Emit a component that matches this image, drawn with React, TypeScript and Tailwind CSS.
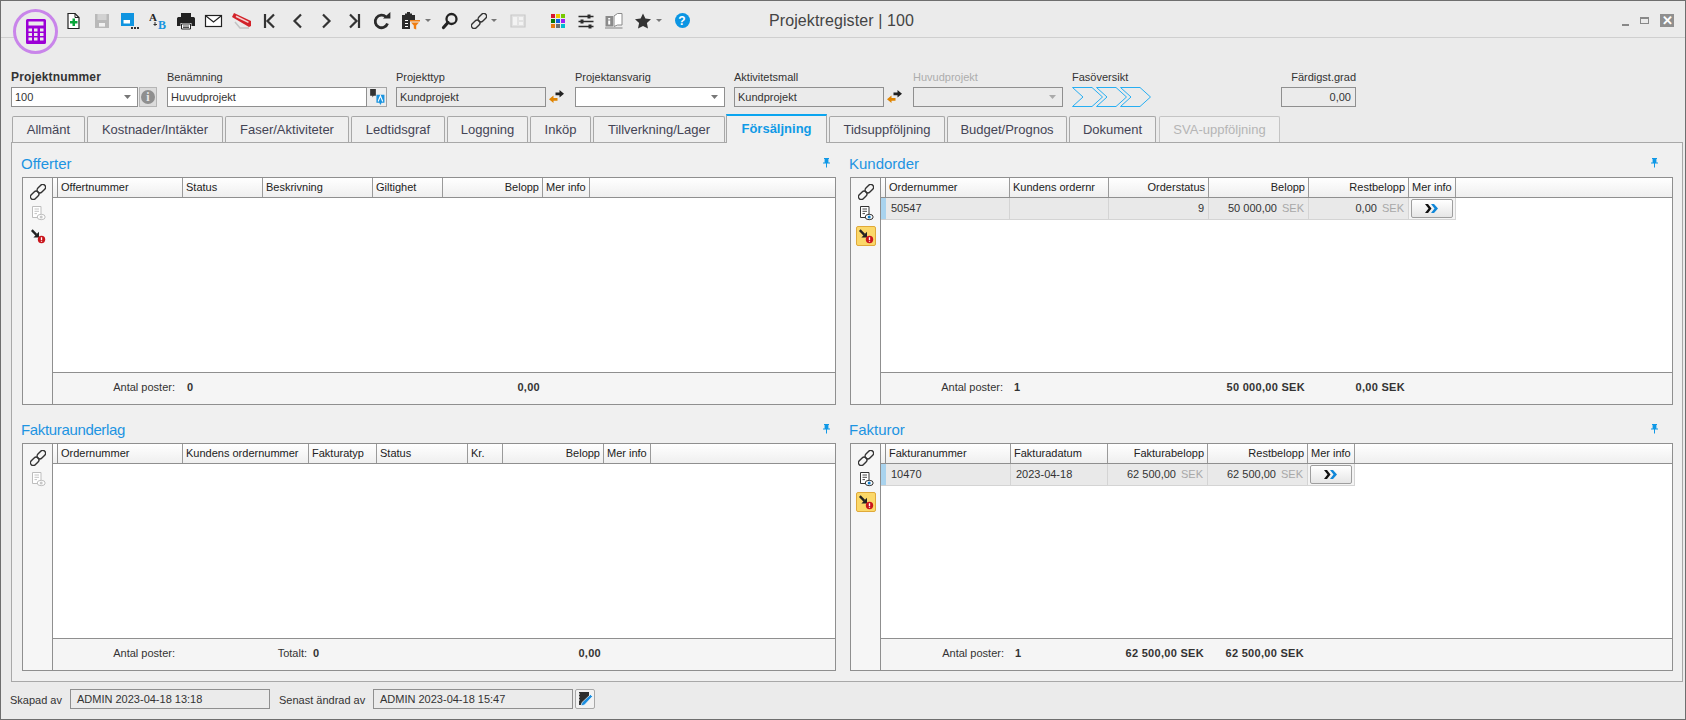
import React from "react";

type Col = { label: string; w: number; right?: boolean };
type Cell = { text?: React.ReactNode; right?: boolean; bold?: boolean; pr?: number };

const S = ({ w = 18, h = 18, vb = "0 0 18 18", children }: { w?: number; h?: number; vb?: string; children: React.ReactNode }) => (
  <svg width={w} height={h} viewBox={vb} className="block shrink-0">{children}</svg>
);

const IconNew = () => (
  <S>
    <path d="M3 1.5h7l4 4v11H3z" fill="#fff" stroke="#222" strokeWidth="1.2" />
    <path d="M10 1.5v4h4" fill="none" stroke="#222" />
    <path d="M7.5 6.5H10V9h2.5v2.5H10V14H7.5v-2.5H5V9h2.5z" fill="#0aa53a" />
  </S>
);
const IconSave = () => (
  <S>
    <path d="M2 2h14v14H2z" fill="#b9b9b9" />
    <path d="M4.5 2h9v6h-9z" fill="#d2d2d2" />
    <path d="M6 11h6v3.6H6z" fill="#f1f1f1" />
  </S>
);
const IconSaveAs = () => (
  <S w={20} vb="0 0 20 18">
    <path d="M1 1h13v13H1z" fill="#0f94e0" />
    <path d="M3.5 8h6.5v3.5H3.5z" fill="#fff" />
    <path d="M11 15h2v2h-2zM14 15h2v2h-2zM17 15h2v2h-2z" fill="#333" />
  </S>
);
const IconAB = () => (
  <S w={18} vb="0 0 18 18">
    <text x="0" y="9" fontFamily="Liberation Serif" fontWeight="700" fontSize="11" fill="#222">A</text>
    <path d="M6 10v4M4.5 12.5h3.5" stroke="#333" fill="none" strokeWidth="1" />
    <text x="9" y="16.5" fontFamily="Liberation Serif" fontWeight="700" fontSize="12" fill="#1895e0">B</text>
  </S>
);
const IconPrint = () => (
  <S w={20} vb="0 0 20 18">
    <path d="M5 1h10v4H5z" fill="#222" />
    <path d="M1 6.5C1 5.5 2 5 3 5h14c1 0 2 .5 2 1.5V14h-3.5v-3h-11v3H1z" fill="#222" />
    <path d="M5.5 12h9v5h-9z" fill="#fff" stroke="#222" />
    <path d="M7 14h6M7 15.5h6" stroke="#222" strokeWidth=".8" />
  </S>
);
const IconMail = () => (
  <S w={20} vb="0 0 20 18">
    <rect x="1.5" y="3.5" width="16" height="11" fill="#fff" stroke="#222" strokeWidth="1.2" />
    <path d="M2 4l7.5 6L17 4" fill="none" stroke="#222" strokeWidth="1.2" />
  </S>
);
const IconTag = () => (
  <S w={20} vb="0 0 20 18">
    <path d="M0 5L2 1 19 9v5l-2 1z" fill="#d3232a" />
    <path d="M4 4.2L16.5 10.4" stroke="#f6d2d2" strokeWidth="1.6" />
    <path d="M3 10l5 6h9" stroke="#c4c4c4" strokeWidth="1.6" fill="none" />
  </S>
);
const Nav = ({ d }: { d: string }) => (
  <S>
    <path d={d} fill="none" stroke="#333" strokeWidth="2.2" />
  </S>
);
const IconRefresh = () => (
  <S w={20} vb="0 0 20 18">
    <path d="M15.5 11.5A6.3 6.3 0 1 1 14 5" fill="none" stroke="#2b2b2b" strokeWidth="2.8" />
    <path d="M11 6.6h7.4V0z" fill="#2b2b2b" />
  </S>
);
const IconClip = () => (
  <S w={20} h={20} vb="0 0 20 20">
    <path d="M1 4h3V2.5h2V1h3v1.5h2V4h3v5H9v9H1z" fill="#2b2b2b" />
    <path d="M4 9h3v1H4zM4 12h3v1H4zM4 15h3v1H4z" fill="#fff" />
    <path d="M9 9h10v1.5H9zM10 11.5h8l-2.8 3v4l-2.4-1v-3z" fill="#ef7d11" />
  </S>
);
const Caret = () => (
  <svg width="6" height="3" viewBox="0 0 6 3" className="ml-1 block shrink-0">
    <path d="M0 0h6L3 3z" fill="#777" />
  </svg>
);
const IconSearch = () => (
  <S>
    <circle cx="10.5" cy="7" r="5" fill="none" stroke="#222" strokeWidth="2.3" />
    <path d="M7 10.5L2.5 15.5" stroke="#222" strokeWidth="3.2" strokeLinecap="round" />
  </S>
);
const IconLink = ({ c = "#333", s = 16 }: { c?: string; s?: number }) => (
  <svg width={s} height={s} viewBox="0 0 16 16" className="block shrink-0">
    <g fill="none" stroke={c} strokeWidth="1.4" transform="rotate(-45 8 8)">
      <rect x="-1.5" y="5.2" width="9.6" height="5.6" rx="2.8" />
      <rect x="7.9" y="5.2" width="9.6" height="5.6" rx="2.8" />
    </g>
  </svg>
);
const IconLayout = () => (
  <S>
    <path d="M2 3h14v12H2z" fill="#e2e2e2" stroke="#c9c9c9" strokeWidth="1.2" />
    <path d="M4 5h4v8H4z M10 5h4v3h-4z M10 10h4v3h-4z" fill="#f3f3f3" />
  </S>
);
const IconColors = () => {
  const c = ["#d8142c", "#e8c800", "#78c800", "#0a7a0a", "#1060e0", "#a020f0", "#e87a10", "#6f6f6f", "#00bcd0"];
  return (
    <div className="grid h-[14px] w-[14px] grid-cols-3 gap-[1px]">
      {c.map((x) => (
        <svg key={x} viewBox="0 0 4 4" className="block h-full w-full"><rect width="4" height="4" fill={x} /></svg>
      ))}
    </div>
  );
};
const IconSliders = () => (
  <S>
    <path d="M1.5 4.5h15M1.5 9.5h15M1.5 14.5h15" stroke="#2b2b2b" strokeWidth="1.4" />
    <path d="M10.5 2.5h3v4h-3zM3.5 7.5h3v4h-3zM11.5 12.5h3v4h-3z" fill="#2b2b2b" />
  </S>
);
const IconBook = () => (
  <S w={18} vb="0 0 18 18">
    <path d="M.5 4h7.5v10.5H.5z" fill="#8a8a8a" />
    <path d="M3.2 6h2v1.4h-2zM3.2 8.4h2v4h-2z" fill="#fff" />
    <path d="M9 4l3.5-2.5 4.5 0V13l-4.5 0L9 14.5z" fill="#fff" stroke="#8a8a8a" />
    <path d="M0 16h17.5" stroke="#8a8a8a" strokeWidth="1.1" />
  </S>
);
const IconStar = () => (
  <S>
    <path d="M9 1.5l2.4 5.1 5.6.7-4.1 3.8 1.1 5.5L9 13.9l-5 2.7 1.1-5.5L1 7.3l5.6-.7z" fill="#333" />
  </S>
);
const IconHelp = () => (
  <div className="flex h-[15px] w-[15px] items-center justify-center rounded-full bg-[#0b95e3] text-[12px] font-bold leading-none text-white">?</div>
);
const IconArrows = () => (
  <svg width="15" height="15" viewBox="0 0 15 15" className="block shrink-0">
    <path d="M6.5 3.5H10.5V1L15 4.8 10.5 8.5V6.2H6.5z" fill="#222" />
    <path d="M8.5 9H4.5V6.5L0 10.2 4.5 14V11.7H8.5z" fill="#e08400" />
  </svg>
);
const IconDoc = ({ c = "#333", e = "#0f7cc8" }: { c?: string; e?: string }) => (
  <svg width="16" height="16" viewBox="0 0 16 16" className="block shrink-0">
    <path d="M2.5 1.5h8.5v11H2.5z" fill="#fff" stroke={c} />
    <path d="M4.5 4H9M4.5 6.3H9M4.5 8.6H7" stroke={c} strokeWidth=".9" />
    <ellipse cx="11.2" cy="12" rx="4" ry="2.7" fill="#fff" stroke={c} />
    <circle cx="11.2" cy="12" r="1.5" fill={e} />
  </svg>
);
const IconAlert = () => (
  <svg width="16" height="16" viewBox="0 0 16 16" className="block shrink-0">
    <path d="M1.8 2.2L6.4 6.8" stroke="#222" strokeWidth="2.4" />
    <path d="M9 3.8V9.4H3.4z" fill="#222" />
    <circle cx="11.5" cy="11.5" r="3.7" fill="#c9151c" />
    <path d="M11.5 9.2v2.8M11.5 12.8v1" stroke="#fff" strokeWidth="1.3" />
  </svg>
);
const IconPin = () => (
  <svg width="9" height="10" viewBox="0 0 9 10" className="block shrink-0">
    <path d="M2 0h5v1H6.4v3.4H8v1.2H5v4H4v-4H1V4.4h1.6V1H2z" fill="#0f98e6" />
  </svg>
);
const IconMore = () => (
  <svg width="14" height="9" viewBox="0 0 14 9" className="block">
    <path d="M0 0h3l3.5 4.5L3 9H0l3.5-4.5z" fill="#111" />
    <path d="M6 0h3l4 4.5L9 9H6l3.5-4.5z" fill="#1087d8" />
  </svg>
);

const Slot = ({ w = "w-[28px]", children }: { w?: string; children: React.ReactNode }) => (
  <div className={`flex h-full items-center justify-center ${w}`}>{children}</div>
);

const Toolbar = () => (
  <div className="relative flex h-[37px] shrink-0 items-center border-b border-[#cfcfcf] pt-[3px]">
    <div className="absolute left-[12px] top-[8px] z-10 flex h-[45px] w-[45px] items-center justify-center rounded-full border-[3px] border-[#c985ea] bg-[#ebebeb]">
      <svg width="20" height="25" viewBox="0 0 20 25" className="block">
        <path d="M1.5 0h17A1.5 1.5 0 0 1 20 1.5v22a1.5 1.5 0 0 1-1.5 1.5h-17A1.5 1.5 0 0 1 0 23.5v-22A1.5 1.5 0 0 1 1.5 0z" fill="#9c00d6" />
        <path d="M2.5 2.5h15v4h-15zM2.5 9.5H6v3H2.5zM8 9.5h3.5v3H8zM14 9.5h3.5v3H14zM2.5 14H6v3H2.5zM8 14h3.5v3H8zM14 14h3.5v3H14zM2.5 18.5H6v3H2.5zM8 18.5h3.5v3H8zM14 18.5h3.5v3H14z" fill="#ebebeb" />
      </svg>
    </div>
    <div className="ml-[59px] flex h-[28px] items-center">
      <Slot><IconNew /></Slot>
      <Slot><IconSave /></Slot>
      <Slot><IconSaveAs /></Slot>
      <Slot><IconAB /></Slot>
      <Slot><IconPrint /></Slot>
      <Slot><IconMail /></Slot>
      <Slot><IconTag /></Slot>
      <Slot><Nav d="M4 2v14M13 2.5L6.5 9l6.5 6.5" /></Slot>
      <Slot><Nav d="M12 2.5L5.5 9l6.5 6.5" /></Slot>
      <Slot><Nav d="M6 2.5L12.5 9 6 15.5" /></Slot>
      <Slot><Nav d="M14 2v14M5 2.5L11.5 9 5 15.5" /></Slot>
      <Slot><IconRefresh /></Slot>
      <Slot w="w-[40px]"><IconClip /><Caret /></Slot>
      <Slot><IconSearch /></Slot>
      <Slot w="w-[40px]"><IconLink /><Caret /></Slot>
      <Slot><IconLayout /></Slot>
      <div className="w-[12px]" />
      <Slot><IconColors /></Slot>
      <Slot><IconSliders /></Slot>
      <Slot><IconBook /></Slot>
      <Slot w="w-[40px]"><IconStar /><Caret /></Slot>
      <Slot><IconHelp /></Slot>
    </div>
    <div className="ml-[73px] text-[16px] leading-none tracking-[0.1px] text-[#444]">Projektregister | 100</div>
    <div className="ml-auto mr-[11px] flex items-center">
      <div className="mt-[9px] h-[2px] w-[7px] bg-[#888]" />
      <div className="ml-[11px] h-[7px] w-[9px] border border-t-2 border-[#888]" />
      <div className="ml-[11px] flex h-[13px] w-[14px] items-center justify-center bg-[#8f8f8f] text-[13px] font-bold leading-none text-white">✕</div>
    </div>
  </div>
);

const Field = ({ label, w, ml, muted, right, bold, children }: { label: string; w: string; ml: string; muted?: boolean; right?: boolean; bold?: boolean; children: React.ReactNode }) => (
  <div className={`flex shrink-0 flex-col ${w} ${ml}`}>
    <div className={`mb-[3px] h-[14px] whitespace-nowrap leading-[14px] ${muted ? "text-[#adadad]" : "text-[#333]"} ${right ? "text-right" : ""} ${bold ? "text-[12px] font-bold tracking-[0.15px]" : "text-[11px]"}`}>{label}</div>
    <div className="flex h-[20px]">{children}</div>
  </div>
);

const Box = ({ text, white, right, children }: { text?: string; white?: boolean; right?: boolean; children?: React.ReactNode }) => (
  <div className={`flex h-full min-w-0 flex-1 items-center border border-[#8f8f8f] px-[3px] text-[11px] text-[#333] ${white ? "bg-white" : "bg-[#ebebeb]"} ${right ? "justify-end pr-[4px]" : ""}`}>
    <span className="flex-1 whitespace-nowrap">{text}</span>
    {children}
  </div>
);

const DD = ({ c = "#777" }: { c?: string }) => (
  <svg width="7" height="4" viewBox="0 0 7 4" className="ml-auto mr-[3px] block shrink-0">
    <path d="M0 0h7L3.5 4z" fill={c} />
  </svg>
);

const FormRow = () => (
  <div className="flex h-[69px] shrink-0 pl-[10px] pt-[32px]">
    <Field label="Projektnummer" w="w-[146px]" ml="" bold>
      <Box text="100" white><DD /></Box>
      <div className="ml-[1px] flex h-[20px] w-[18px] items-center justify-center border border-[#b5b5b5] bg-[#dcdcdc]">
        <div className="flex h-[14px] w-[14px] items-center justify-center rounded-full bg-[#8f8f8f] font-['Liberation_Serif'] text-[12px] font-bold leading-none text-[#e8e8e8]">i</div>
      </div>
    </Field>
    <Field label="Benämning" w="w-[220px]" ml="ml-[10px]">
      <div className="flex min-w-0 flex-1 items-center border border-[#8f8f8f] bg-white pl-[3px] text-[11px] text-[#333]">Huvudprojekt</div>
      <div className="flex w-[20px] items-center justify-center border border-l-0 border-[#a5a5a5] bg-[#eeeeee]">
        <svg width="16" height="16" viewBox="0 0 14 14" className="block">
          <path d="M1 0h5v6H4L3 7.5V6H1z" fill="#333" />
          <path d="M6.5 5h7v7H11l-1 2-1-2H6.5z" fill="#1a94e0" />
          <path d="M8 11l2-5 2 5" stroke="#fff" fill="none" />
        </svg>
      </div>
    </Field>
    <Field label="Projekttyp" w="w-[150px]" ml="ml-[9px]"><Box text="Kundprojekt" /></Field>
    <div className="flex w-[29px] shrink-0 items-end justify-start pb-[3px] pl-[3px]"><IconArrows /></div>
    <Field label="Projektansvarig" w="w-[150px]" ml=""><Box white><DD /></Box></Field>
    <Field label="Aktivitetsmall" w="w-[150px]" ml="ml-[9px]"><Box text="Kundprojekt" /></Field>
    <div className="flex w-[29px] shrink-0 items-end justify-start pb-[3px] pl-[3px]"><IconArrows /></div>
    <Field label="Huvudprojekt" w="w-[150px]" ml="" muted><Box><DD c="#aaa" /></Box></Field>
    <Field label="Fasöversikt" w="w-[80px]" ml="ml-[9px]">
      <svg width="80" height="20" viewBox="0 0 80 20" className="block">
        {[0, 24, 48].map((x) => (
          <path key={x} d={`M${x + 0.5} 0.5H${x + 20}L${x + 30.5} 10L${x + 20} 19.5H${x + 0.5}L${x + 11} 10Z`} fill="none" stroke="#27aef2" />
        ))}
      </svg>
    </Field>
    <Field label="Färdigst.grad" w="w-[75px]" ml="ml-[129px]" right><Box right><span className="text-right">0,00</span></Box></Field>
  </div>
);

const tabs = [
  { t: "Allmänt", c: "w-[73px] ml-[1px]" },
  { t: "Kostnader/Intäkter", c: "w-[136px] ml-[2px]" },
  { t: "Faser/Aktiviteter", c: "w-[124px] ml-[2px]" },
  { t: "Ledtidsgraf", c: "w-[94px] ml-[2px]" },
  { t: "Loggning", c: "w-[81px] ml-[2px]" },
  { t: "Inköp", c: "w-[61px] ml-[2px]" },
  { t: "Tillverkning/Lager", c: "w-[132px] ml-[2px]" },
  { t: "Försäljning", c: "w-[101px] ml-[1px]", active: true },
  { t: "Tidsuppföljning", c: "w-[116px] ml-[2px]" },
  { t: "Budget/Prognos", c: "w-[120px] ml-[2px]" },
  { t: "Dokument", c: "w-[87px] ml-[2px]" },
  { t: "SVA-uppföljning", c: "w-[121px] ml-[3px]", off: true },
];

const Tabs = () => (
  <div className="relative z-10 mt-[7px] flex h-[28px] shrink-0 items-end pl-[10px]">
    {tabs.map((t) =>
      t.active ? (
        <div key={t.t} className={`flex h-[29px] shrink-0 items-center justify-center border-x border-t-[2px] border-x-[#a8a8a8] border-t-[#0aa5f0] bg-[#f0f0f0] pb-[1px] text-[13px] font-bold text-[#0f9ae6] -mb-[1px] ${t.c}`}>{t.t}</div>
      ) : (
        <div key={t.t} className={`flex h-[26px] shrink-0 items-center justify-center rounded-t-[2px] border border-b-0 ${t.off ? "border-[#c4c4c4] text-[#b5b5b5]" : "border-[#a8a8a8] text-[#445]"} bg-[#efefef] text-[13px] ${t.c}`}>{t.t}</div>
      )
    )}
  </div>
);

const Panel = ({ title, titleCls = "", cols, icons, rows, foot, pin }: { title: string; titleCls?: string; cols: Col[]; icons: React.ReactNode; rows?: React.ReactNode[][]; foot: Cell[]; pin: string }) => (
  <div className="flex min-h-0 flex-col">
    <div className={`flex h-[24px] shrink-0 items-center justify-between pb-[4px] ${pin}`}>
      <span className={`-ml-[1px] text-[15px] leading-none text-[#1d94e2] ${titleCls}`}>{title}</span>
      <IconPin />
    </div>
    <div className="flex min-h-0 flex-1 border border-[#8f8f8f]">
      <div className="flex w-[30px] shrink-0 flex-col items-center gap-[5px] border-r border-[#8f8f8f] bg-[#f6f6f6] pt-[6px]">{icons}</div>
      <div className="flex min-w-0 flex-1 flex-col">
        <div className="flex h-[20px] shrink-0 border-b border-[#8f8f8f] bg-gradient-to-b from-white to-[#efefef]">
          <div className="w-[5px] shrink-0 border-r border-[#8f8f8f]" />
          {cols.map((c) => (
            <div key={c.label} style={{ width: c.w }} className={`flex shrink-0 items-center overflow-hidden whitespace-nowrap border-r border-[#9a9a9a] px-[3px] text-[11px] text-[#222] ${c.right ? "justify-end" : ""}`}>{c.label}</div>
          ))}
        </div>
        <div className="min-h-0 flex-1 bg-white">
          {(rows || []).map((r, i) => (
            <div key={i} className="flex h-[22px]">
              <div className="w-[5px] shrink-0 border-b border-[#d0d0d0] bg-[#a9d3ee]" />
              {r.map((v, j) => {
                const last = j === r.length - 1;
                return (
                  <div key={j} style={{ width: cols[j].w }} className={`flex shrink-0 items-center whitespace-nowrap border-b border-r border-[#d4d4d4] text-[11px] text-[#333] ${last ? "bg-[#f4f4f4] pl-[2px]" : "bg-[#e9e9e9]"} ${cols[j].right ? "justify-end pr-[4px]" : last ? "" : "pl-[5px]"}`}>{v}</div>
                );
              })}
            </div>
          ))}
        </div>
        <div className="flex h-[32px] shrink-0 border-t border-[#8f8f8f] bg-[#f5f5f5] pb-[3px] pl-[5px]">
          {foot.map((f, i) => (
            <div key={i} style={{ width: cols[i].w, paddingRight: f.pr ?? 0 }} className={`flex shrink-0 items-center whitespace-nowrap text-[11px] text-[#333] ${f.right ? "justify-end" : "pl-[4px]"} ${f.bold ? "font-bold tracking-[0.3px]" : ""}`}>{f.text}</div>
          ))}
        </div>
      </div>
    </div>
  </div>
);

const Sek = ({ v }: { v: string }) => (
  <span>{v} <span className="ml-[2px] text-[#a8a8a8]">SEK</span></span>
);
const More = () => (
  <div className="flex h-[19px] w-[42px] items-center justify-center rounded-[2px] border border-[#9e9e9e] bg-gradient-to-b from-white to-[#e6e6e6]"><IconMore /></div>
);

const Side = ({ active, yellow, two }: { active?: boolean; yellow?: boolean; two?: boolean }) => (
  <>
    <IconLink c="#333" s={16} />
    {active ? <IconDoc /> : <IconDoc c="#bdbdbd" e="#c8c8c8" />}
    {two ? null : yellow ? (
      <div className="flex h-[20px] w-[20px] items-center justify-center rounded-[2px] border border-[#e0a93a] bg-[#fbd869]"><IconAlert /></div>
    ) : (
      <div className="flex h-[20px] items-center"><IconAlert /></div>
    )}
  </>
);

const Main = () => (
  <div className="ml-[10px] mr-[2px] grid h-[540px] shrink-0 grid-cols-[814px_823px] grid-rows-[252px_252px] gap-x-[14px] gap-y-[14px] border border-[#a8a8a8] bg-[#f0f0f0] px-[10px] pt-[10px]">
    <Panel
      title="Offerter"
      pin="pr-[5px]"
      icons={<Side />}
      cols={[
        { label: "Offertnummer", w: 125 },
        { label: "Status", w: 80 },
        { label: "Beskrivning", w: 110 },
        { label: "Giltighet", w: 70 },
        { label: "Belopp", w: 100, right: true },
        { label: "Mer info", w: 47 },
      ]}
      foot={[
        { text: "Antal poster:", right: true, pr: 8 },
        { text: "0", bold: true },
        {},
        {},
        { text: "0,00", right: true, bold: true, pr: 3 },
      ]}
    />
    <Panel
      title="Kundorder"
      pin="pr-[14px]"
      icons={<Side active yellow />}
      cols={[
        { label: "Ordernummer", w: 124 },
        { label: "Kundens ordernr", w: 99 },
        { label: "Orderstatus", w: 100, right: true },
        { label: "Belopp", w: 100, right: true },
        { label: "Restbelopp", w: 100, right: true },
        { label: "Mer info", w: 47 },
      ]}
      rows={[["50547", "", "9", <Sek v="50 000,00" />, <Sek v="0,00" />, <More />]]}
      foot={[
        { text: "Antal poster:", right: true, pr: 7 },
        { text: "1", bold: true },
        {},
        { text: "50 000,00 SEK", right: true, bold: true, pr: 4 },
        { text: "0,00 SEK", right: true, bold: true, pr: 4 },
      ]}
    />
    <Panel
      title="Fakturaunderlag"
      titleCls="tracking-[-0.35px]"
      pin="pr-[5px]"
      icons={<Side two />}
      cols={[
        { label: "Ordernummer", w: 125 },
        { label: "Kundens ordernummer", w: 126 },
        { label: "Fakturatyp", w: 68 },
        { label: "Status", w: 91 },
        { label: "Kr.", w: 35 },
        { label: "Belopp", w: 101, right: true },
        { label: "Mer info", w: 47 },
      ]}
      foot={[
        { text: "Antal poster:", right: true, pr: 8 },
        { text: "Totalt:", right: true, pr: 2 },
        { text: "0", bold: true },
        {},
        {},
        { text: "0,00", right: true, bold: true, pr: 3 },
      ]}
    />
    <Panel
      title="Fakturor"
      pin="pr-[14px]"
      icons={<Side active yellow />}
      cols={[
        { label: "Fakturanummer", w: 125 },
        { label: "Fakturadatum", w: 97 },
        { label: "Fakturabelopp", w: 100, right: true },
        { label: "Restbelopp", w: 100, right: true },
        { label: "Mer info", w: 47 },
      ]}
      rows={[["10470", "2023-04-18", <Sek v="62 500,00" />, <Sek v="62 500,00" />, <More />]]}
      foot={[
        { text: "Antal poster:", right: true, pr: 7 },
        { text: "1", bold: true },
        { text: "62 500,00 SEK", right: true, bold: true, pr: 4 },
        { text: "62 500,00 SEK", right: true, bold: true, pr: 4 },
      ]}
    />
  </div>
);

const Footer = () => (
  <div className="flex flex-1 items-start pl-[9px] pt-[7px] text-[11px] text-[#333]">
    <span className="flex h-[20px] w-[60px] items-center pt-[2px]">Skapad av</span>
    <div className="flex h-[20px] w-[200px] items-center border border-[#8f8f8f] pl-[6px]">ADMIN 2023-04-18 13:18</div>
    <span className="ml-[9px] flex h-[20px] w-[94px] items-center pt-[2px]">Senast ändrad av</span>
    <div className="flex h-[20px] w-[200px] items-center border border-[#8f8f8f] pl-[6px]">ADMIN 2023-04-18 15:47</div>
    <div className="ml-[2px] flex h-[20px] w-[20px] items-center justify-center rounded-[2px] border border-[#a8a8a8] bg-[#f2f2f2]">
      <svg width="16" height="16" viewBox="0 0 16 16" className="block">
        <path d="M2 1h10v7l-6 6H2z" fill="#2e2e2e" />
        <path d="M1 3h2M1 6h2M1 9h2" stroke="#eee" />
        <path d="M13.5 3.5l2 2-8 8.5-3.5 1 1-3.5z" fill="#1d8fe0" stroke="#fff" strokeWidth=".7" />
      </svg>
    </div>
  </div>
);

export default function App() {
  return (
    <div className="flex h-[720px] w-[1686px] flex-col overflow-hidden border border-[#6e6e6e] bg-[#ebebeb] font-['Liberation_Sans',Arial,sans-serif]">
      <Toolbar />
      <FormRow />
      <Tabs />
      <Main />
      <Footer />
    </div>
  );
}
